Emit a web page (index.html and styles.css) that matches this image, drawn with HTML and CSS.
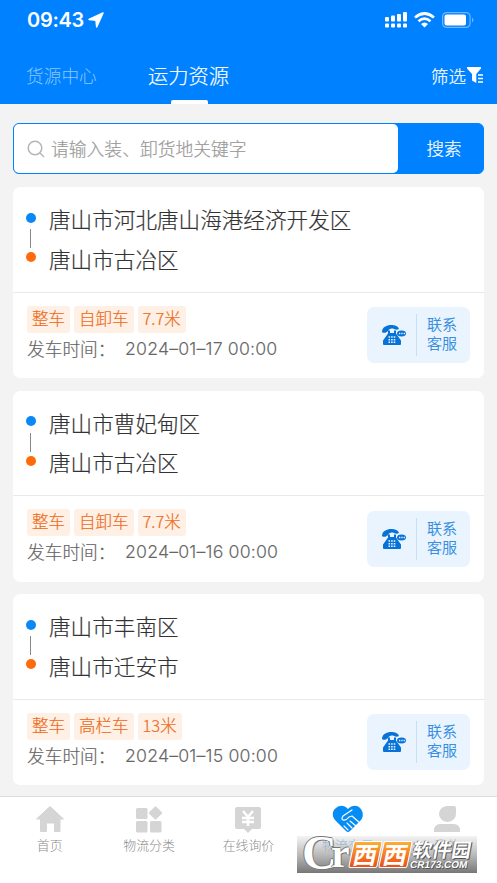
FILE: index.html
```html
<!DOCTYPE html>
<html lang="zh-CN">
<head>
<meta charset="utf-8">
<meta name="viewport" content="width=device-width">
<title>运力资源</title>
<link rel="stylesheet" href="styles.css">
</head>
<body>
<svg class="defs" width="0" height="0">
  <symbol id="phone" viewBox="0 0 25 20">
    <path fill="#0873d6" d="M1 7C1 2 6 0 10 0c4 0 7 1 8 4-2 1-3 1-5 0-3-1-5 0-6 2-1 1-4 3-6 1zM7 5.500h2v2.500h4v-2.500h2v3l5 7V19q0 1-1 1H3q-1 0-1-1v-3.500l5-7z"/>
    <ellipse cx="20.500" cy="8.500" rx="4.500" ry="3" fill="#0873d6"/>
    <path stroke="#eaf4ff" stroke-width="1.300" stroke-dasharray="1.300 1" d="M18 8.500h6"/>
    <path stroke="#eaf4ff" stroke-width="1.600" stroke-dasharray="1.600 1" d="M7.500 12h7M7.500 14.700h7M7.500 17.300h7"/>
  </symbol>
</svg>
<header class="header">
  <div class="status">
    <span class="clock">09:43</span>
    <svg class="locate" width="16" height="16" viewBox="0 0 16 16"><path fill="#fff" stroke="#fff" stroke-width="1.500" stroke-linejoin="round" d="M15 1 1 7.500l7 .8.700 6.700z"/></svg>
    <svg class="signal" width="23" height="16" viewBox="0 0 23 16" fill="#fff"><rect y="5" width="4" height="4.500" rx="1"/><rect x="6" y="3.500" width="4" height="6" rx="1"/><rect x="12" y="2" width="4" height="7.500" rx="1"/><rect x="18" width="4" height="9.500" rx="1"/><rect y="11.500" width="4" height="4" rx="1"/><rect x="6" y="11.500" width="4" height="4" rx="1"/><rect x="12" y="11.500" width="4" height="4" rx="1"/><rect x="18" y="11.500" width="4" height="4" rx="1"/></svg>
    <svg class="wifi" width="21" height="16" viewBox="0 0 21 16" fill="none" stroke="#fff" stroke-width="2.700"><path d="M1 5.500q9.500-8 19 0M4.500 9.200q6-5 12 0"/><path fill="#fff" stroke="none" d="M7 12q3.500-3 7 0l-3.500 3.500z"/></svg>
    <svg class="battery" width="32" height="16" viewBox="0 0 32 16"><rect x=".6" y=".6" width="27.500" height="14.800" rx="4" fill="none" stroke="#6db8ff" stroke-width="1.200"/><rect x="2.500" y="2.500" width="21.500" height="11" rx="2" fill="#fff"/><path fill="#6db8ff" d="M30 5.500q3 2.500 0 5z"/></svg>
  </div>
  <nav class="tabs">
    <span class="tab">货源中心</span>
    <span class="tab active">运力资源</span>
    <span class="filter">筛选<svg width="17" height="16" viewBox="0 0 17 16"><path fill="#fff" d="M0 0h14v1.500L9.300 7v9L5 13.500V7L0 1.500z"/><path stroke="#fff" stroke-width="1.300" d="M11 8h5M11 11.500h5M11 15h5"/></svg></span>
  </nav>
</header>
<main class="main">
  <div class="search">
    <div class="field"><svg width="18" height="18" viewBox="0 0 18 18" fill="none" stroke="#b5b5b5" stroke-width="1.500"><circle cx="8" cy="8" r="6.800"/><path d="m13 13 4 4"/></svg><span>请输入装、卸货地关键字</span></div>
    <div class="button">搜索</div>
  </div>
  <article class="card">
    <div class="route"><div class="stop from">唐山市河北唐山海港经济开发区</div><div class="stop to">唐山市古冶区</div></div>
    <div class="info">
      <div><div class="tags"><span>整车</span><span>自卸车</span><span>7.7米</span></div><div class="time"><span>发车时间：</span><span class="date">2024–01–17 00:00</span></div></div>
      <div class="contact"><svg width="25" height="20"><use href="#phone"/></svg><span>联系<br>客服</span></div>
    </div>
  </article>
  <article class="card">
    <div class="route"><div class="stop from">唐山市曹妃甸区</div><div class="stop to">唐山市古冶区</div></div>
    <div class="info">
      <div><div class="tags"><span>整车</span><span>自卸车</span><span>7.7米</span></div><div class="time"><span>发车时间：</span><span class="date">2024–01–16 00:00</span></div></div>
      <div class="contact"><svg width="25" height="20"><use href="#phone"/></svg><span>联系<br>客服</span></div>
    </div>
  </article>
  <article class="card">
    <div class="route"><div class="stop from">唐山市丰南区</div><div class="stop to">唐山市迁安市</div></div>
    <div class="info">
      <div><div class="tags"><span>整车</span><span>高栏车</span><span>13米</span></div><div class="time"><span>发车时间：</span><span class="date">2024–01–15 00:00</span></div></div>
      <div class="contact"><svg width="25" height="20"><use href="#phone"/></svg><span>联系<br>客服</span></div>
    </div>
  </article>
</main>
<footer class="bottom">
  <div class="item"><svg width="30" height="28" viewBox="0 0 30 28"><path fill="#d5d5d5" stroke="#d5d5d5" stroke-linejoin="round" d="M15 1.500 28.500 14H25v12.500h-5.500V18h-8v8.500H5.500V14H1.500z"/></svg><span>首页</span></div>
  <div class="item"><svg width="28" height="28" viewBox="0 0 28 28" fill="#d5d5d5"><rect x="1" y="3" width="11.500" height="11" rx="1.500"/><rect x="1" y="16" width="11.500" height="11.500" rx="1.500"/><rect x="15" y="16" width="11.500" height="11.500" rx="1.500"/><rect x="15.500" y="3" width="10" height="10" rx="1" transform="rotate(45 20.500 8)"/></svg><span>物流分类</span></div>
  <div class="item"><svg width="28" height="28" viewBox="0 0 28 28"><path fill="#d5d5d5" d="M3 2h22q2 0 2 2v18q0 2-2 2h-7l-4 4-4-4H3q-2 0-2-2V4q0-2 2-2z"/><path fill="none" stroke="#fff" stroke-width="2.400" d="m9 6 5 6 5-6M8 13h12M8 17h12M14 12v9"/></svg><span>在线询价</span></div>
  <div class="item on"><svg width="32" height="28" viewBox="0 0 32 28"><path fill="#058df5" d="M16 4C20 0 25 0 28 3c3 3 4 8 1 12L18 26q-2 2-4 0L3 15C-1 10 1 5 4 3c4-3 8-3 12 1z"/><path fill="none" stroke="#fff" stroke-width="1.200" stroke-linecap="round" stroke-linejoin="round" d="m20 5-9 6q-2 3 0 4 3 1 6-3l3-1 9 8"/><path stroke="#fff" stroke-width="1.100" stroke-linecap="round" d="m18 16 6 5M15 18l5 5M12 21l4 4"/></svg><span>物流交易</span></div>
  <div class="item"><svg width="28" height="28" viewBox="0 0 28 28" fill="#d5d5d5"><path d="M14 1h7q2 0 2 2v6a8.500 8 0 1 1-9-8zM1 27v-3q1-5 7-5h12q6 0 7 5v3z"/></svg><span>我的</span></div>
</footer>
<div class="watermark">
  <span class="cr"><b>C</b><i>r</i></span><span class="xixi"><b>西</b><b>西</b></span><span class="soft"><b>软件园</b><small>CR173.COM</small></span>
</div>
</body>
</html>
```

FILE: styles.css
```css
* { box-sizing: border-box; }
body { margin: 0; width: 497px; height: 883px; overflow: hidden; display: flex; flex-direction: column; position: relative; background: #f3f3f3; font-family: "Noto Sans CJK SC", sans-serif; font-weight: 300; color: #333; -webkit-text-stroke: .2px currentColor; }
.defs { position: absolute; }
svg { display: block; flex: none; }
.header { height: 104px; background: #0081ff; color: #fff; display: flex; flex-direction: column; }
.status { height: 40px; display: flex; align-items: center; padding: 0 23px 0 27px; }
.clock { font: 600 20px/40px Inter, sans-serif; width: 57px; letter-spacing: -.3px; -webkit-text-stroke: 0; }
.locate { margin-left: 4px; }
.signal { margin-left: auto; margin-right: 6px; }
.wifi { margin-right: 7px; }
.tabs { flex: 1; display: flex; align-items: center; padding: 6px 13px 0 26px; }
.tab { font-size: 17.700px; color: #8cc8ff; width: 122px; white-space: nowrap; line-height: 58px; -webkit-text-stroke: 0; }
.tab.active { width: 82px; font-size: 20.300px; color: #fff; position: relative; -webkit-text-stroke: .2px; }
.active::after { content: ""; position: absolute; left: 23px; bottom: 0; width: 37px; height: 4px; border-radius: 2px 2px 0 0; background: #fff; }
.filter { margin-left: auto; display: flex; align-items: center; gap: 1px; font-size: 17.500px; }
.main { height: 692px; padding: 19px 13px 0; display: flex; flex-direction: column; }
.search { height: 51px; margin-bottom: 13px; display: flex; background: #0081ff; border: 1.500px solid #0081ff; border-radius: 6px; flex: none; }
.field { width: 384px; background: #fff; border-radius: 5px; display: flex; align-items: center; gap: 6px; padding-left: 13px; font-size: 17.800px; color: #999; }
.field span { padding-bottom: 2px; }
.button { flex: 1; color: #fff; font-size: 17.500px; display: flex; align-items: center; justify-content: center; padding: 0 0 2px 7px; }
.card { height: 191px; margin-bottom: 12.700px; background: #fff; border-radius: 7px; flex: none; }
.route { height: 105.500px; border-bottom: 1px solid #e9e9e9; padding: 12px 0 0 13px; }
.stop { height: 39.500px; padding-left: 23px; font-size: 21.600px; line-height: 39px; position: relative; }
.stop::before { content: ""; position: absolute; left: 0; top: 13.500px; width: 10px; height: 10px; border-radius: 50%; background: #0a88f5; }
.to::before { background: #ff6b0a; }
.from::after { content: ""; position: absolute; left: 4px; top: 30px; width: 1px; height: 19px; background: #888; }
.info { height: 85px; display: flex; justify-content: space-between; padding: 13px 14px 0; }
.tags { display: flex; gap: 4px; height: 27px; }
.tags span { background: #fff0e5; color: #ee6c1b; border-radius: 3px; padding: 0 5px; font-size: 16.500px; line-height: 25px; }
.time { height: 31px; display: flex; font-size: 17.700px; line-height: 31px; color: #666; white-space: nowrap; }
.time span:first-child { width: 98px; }
.date { font-family: Inter, sans-serif; font-size: 17.700px; letter-spacing: .18px; -webkit-text-stroke: .1px; }
.contact { width: 103px; height: 56px; margin-top: 1.500px; border-radius: 7px; background: #eaf4ff; display: flex; align-items: center; padding-left: 14px; color: #2083dc; font-size: 15px; line-height: 19px; }
.contact span { margin-left: 10px; padding-left: 10px; border-left: 1.500px solid #c7dff6; height: 42px; }
.bottom { flex: 1; background: #fff; border-top: 1px solid #dedede; display: grid; grid-template-columns: repeat(5, 1fr); padding-top: 8px; }
.item { display: flex; flex-direction: column; align-items: center; color: #8c8c8c; font-size: 12.900px; line-height: 22px; -webkit-text-stroke: 0; }
.item span { margin-top: 1px; }
.item.on { color: #65a9e9; }
.watermark { position: absolute; left: 297px; top: 836px; width: 180px; height: 37px; background: linear-gradient(#dddddd55, #aaaaaacc 50%, #777777); display: flex; color: #fff; -webkit-text-stroke: 0; }
.cr { width: 51px; position: relative; font-family: "Liberation Serif", serif; text-shadow: -1px 0 #777, 1px 1px #777, 0 -1px #777; }
.cr b { position: absolute; left: 5px; top: -7px; font-size: 48px; line-height: 48px; font-weight: 700; }
.cr i { position: absolute; left: 34px; top: -4px; font-size: 42px; line-height: 42px; font-weight: 700; font-style: normal; }
.xixi { display: flex; gap: 1px; padding-top: 5px; transform: skewX(-12deg); margin-left: 3px; }
.xixi b { width: 29px; height: 27px; background: linear-gradient(#ffad32, #ed4d18); border: 1px solid #fff; border-radius: 2px; font-size: 24px; line-height: 24px; text-align: center; font-weight: 700; }
.soft { transform: skewX(-10deg); margin-left: 2px; text-shadow: 1px 1px #555, -1px 0 #777; }
.soft b { display: block; font-size: 19.500px; line-height: 25px; font-weight: 700; white-space: nowrap; }
.soft small { display: block; font: 700 10px/7px "Liberation Sans", sans-serif; }
```
